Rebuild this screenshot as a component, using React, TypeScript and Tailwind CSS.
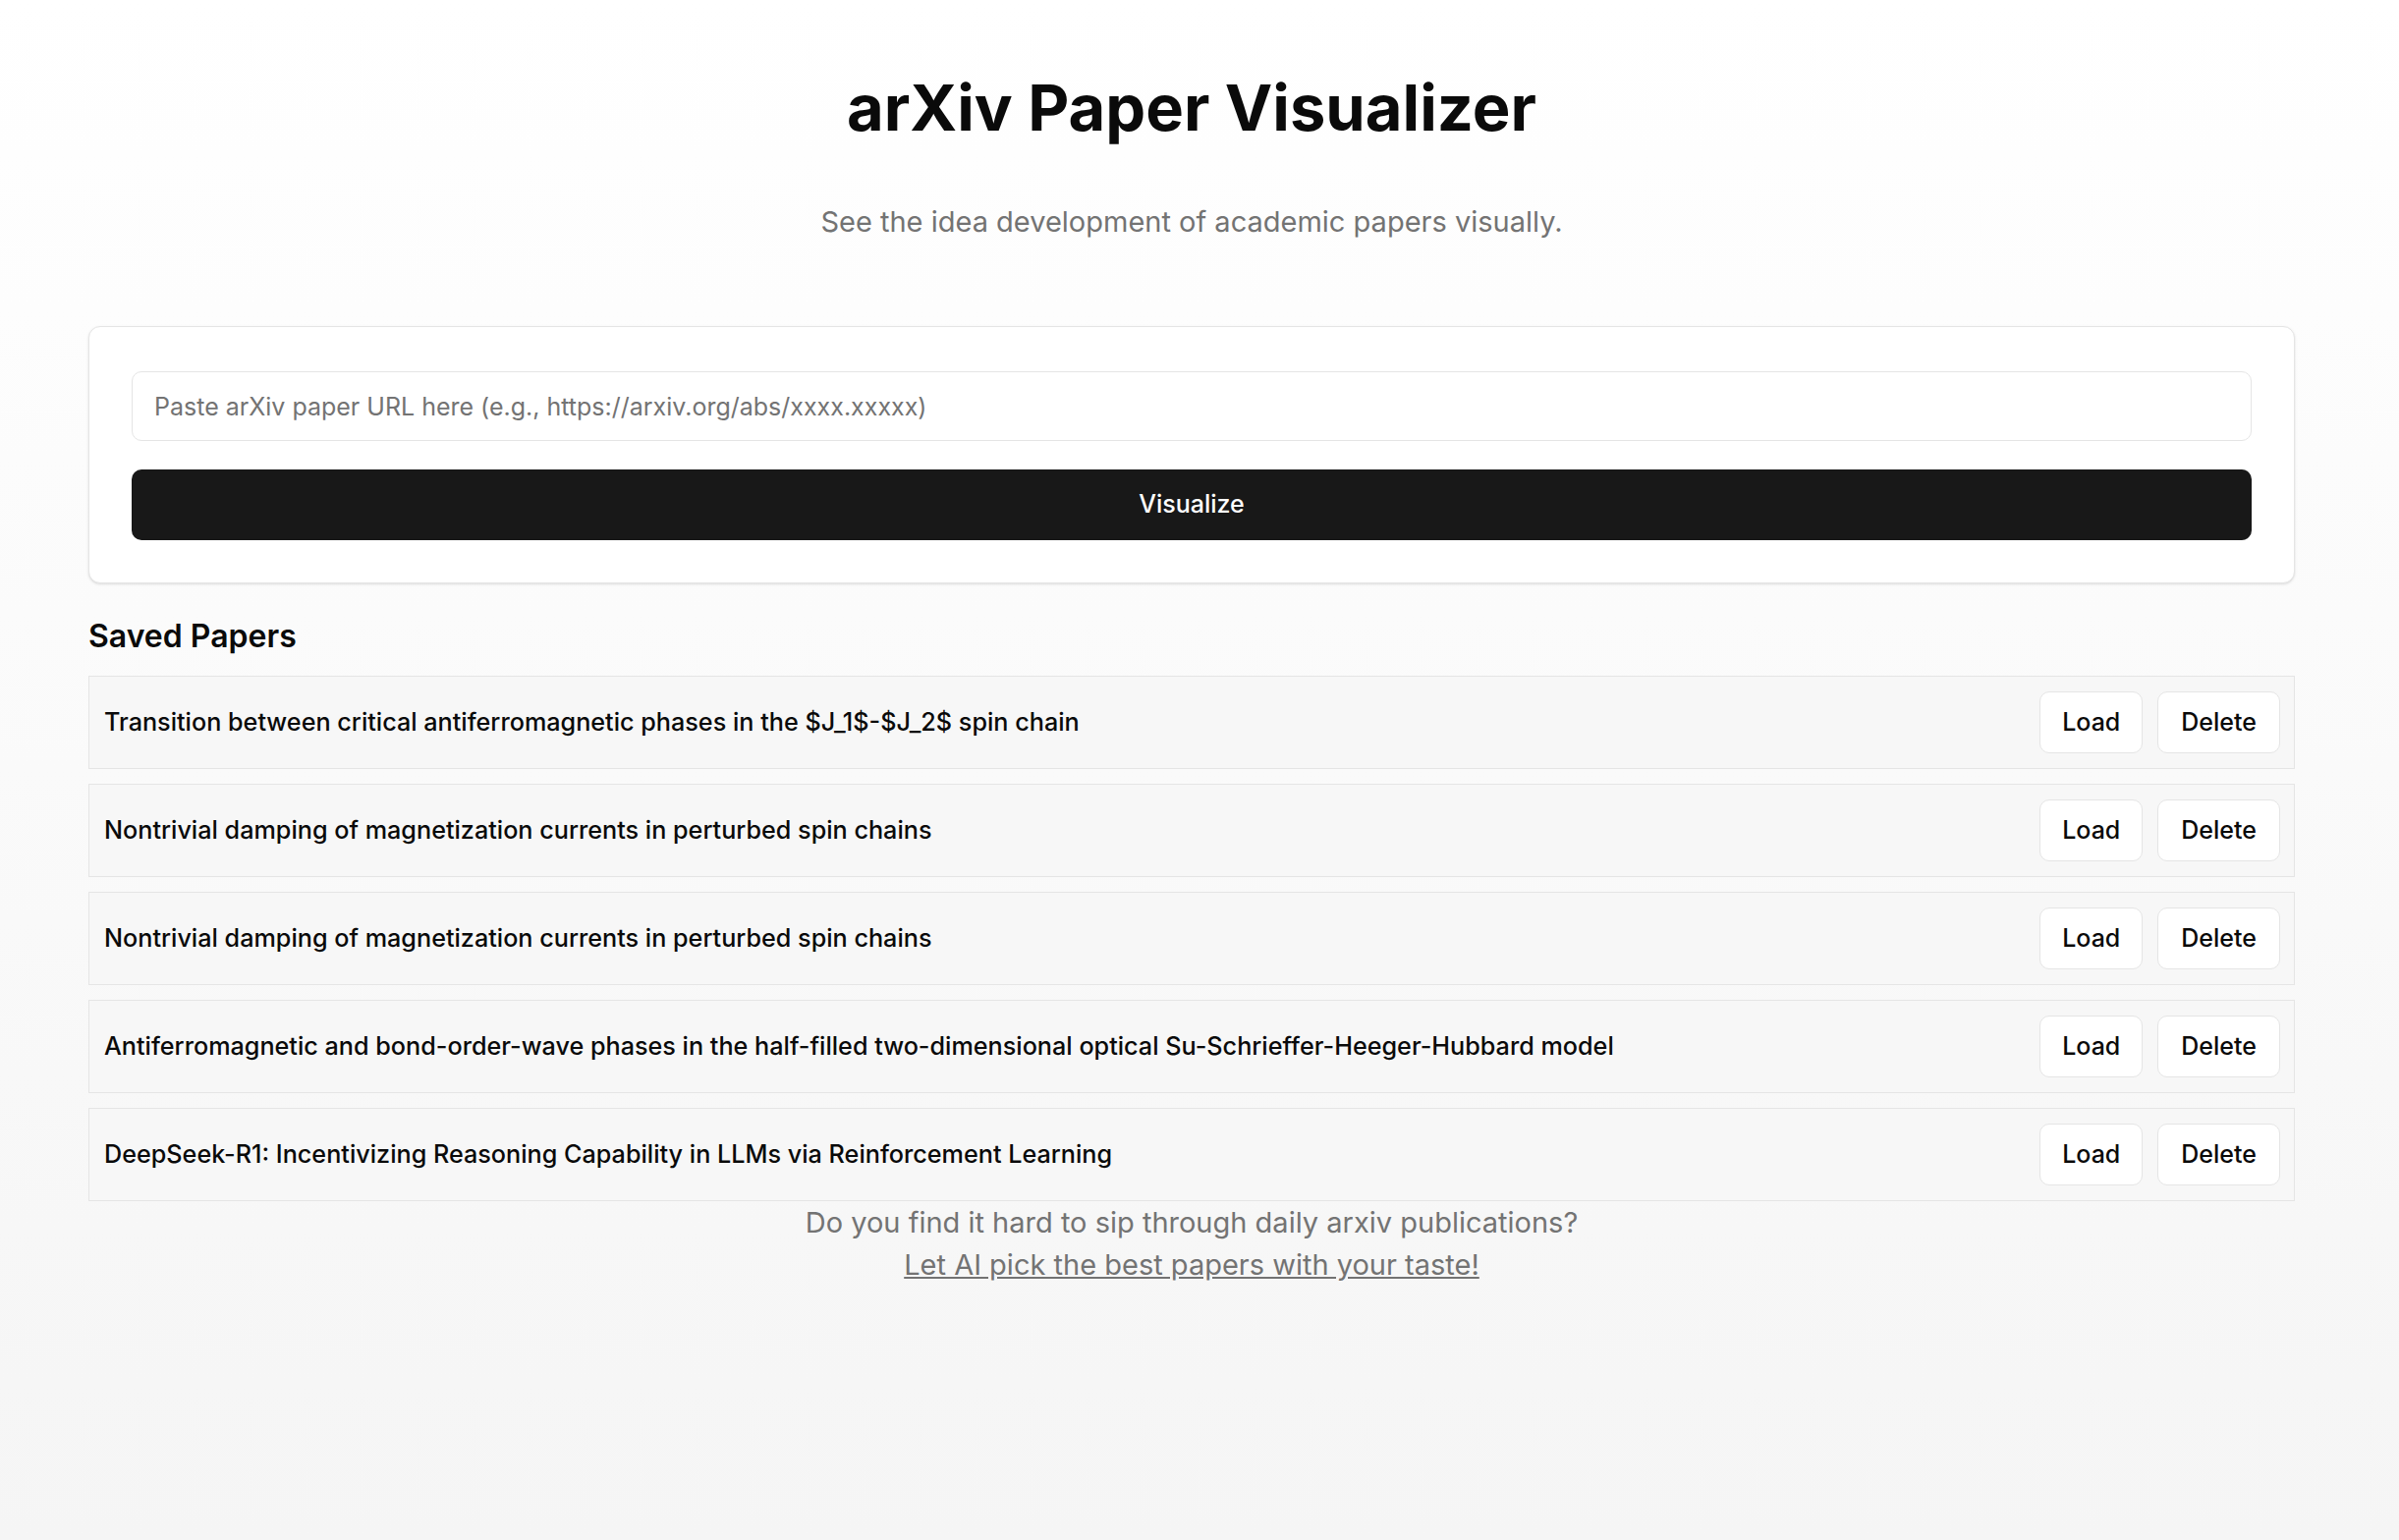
const papers = [
  "Transition between critical antiferromagnetic phases in the $J_1$-$J_2$ spin chain",
  "Nontrivial damping of magnetization currents in perturbed spin chains",
  "Nontrivial damping of magnetization currents in perturbed spin chains",
  "Antiferromagnetic and bond-order-wave phases in the half-filled two-dimensional optical Su-Schrieffer-Heeger-Hubbard model",
  "DeepSeek-R1: Incentivizing Reasoning Capability in LLMs via Reinforcement Learning",
];

function PaperRow({ title }: { title: string }) {
  return (
    <div className="flex items-center justify-between gap-4 border border-[#e5e5e5] bg-[#f7f7f7] py-[15px] pr-[14px] pl-[15px]">
      <span className="truncate text-[25.2px] font-medium text-[#0a0a0a]">{title}</span>
      <div className="flex shrink-0 gap-[15px]">
        <button className="h-[63px] rounded-[10px] border border-[#e5e5e5] bg-white px-[22px] text-[25px] font-medium text-[#0a0a0a]">
          Load
        </button>
        <button className="h-[63px] rounded-[10px] border border-[#e5e5e5] bg-white px-[23px] text-[25px] font-medium text-[#0a0a0a]">
          Delete
        </button>
      </div>
    </div>
  );
}

export default function App() {
  return (
    <div
      className="min-h-[1568px] w-full bg-gradient-to-b from-white to-[#f5f5f5]"
      style={{ fontFamily: "Inter, 'Noto Sans', sans-serif" }}
    >
      <div className="w-[2426px] px-[90px]">
        <h1 className="pt-[70px] text-center text-[65px] leading-[80px] font-bold text-[#0a0a0a]">
          arXiv Paper Visualizer
        </h1>
        <p className="mt-[54px] text-center text-[29px] leading-[43px] text-[#737373]">
          See the idea development of academic papers visually.
        </p>

        <div className="mt-[85px] rounded-[12px] border border-[#e5e5e5] bg-white px-[43px] pt-[45px] pb-[43px] shadow-sm">
          <input
            type="text"
            placeholder="Paste arXiv paper URL here (e.g., https://arxiv.org/abs/xxxx.xxxxx)"
            className="h-[71px] w-full rounded-[10px] border border-[#e5e5e5] bg-white px-[22px] text-[25px] text-[#0a0a0a] outline-none placeholder:text-[#737373]"
          />
          <button className="mt-[29px] h-[72px] w-full rounded-[10px] bg-[#181818] text-[25px] font-medium text-white">
            Visualize
          </button>
        </div>

        <h2 className="mt-[32px] mb-[19px] text-[32px] leading-[43px] font-semibold text-[#0a0a0a]">
          Saved Papers
        </h2>
        <div className="flex flex-col gap-[15px]">
          {papers.map((title, index) => (
            <PaperRow key={index} title={title} />
          ))}
        </div>

        <div className="text-center text-[29px] leading-[43px] text-[#737373]">
          <p>Do you find it hard to sip through daily arxiv publications?</p>
          <a href="#" className="underline">
            Let AI pick the best papers with your taste!
          </a>
        </div>
      </div>
    </div>
  );
}
